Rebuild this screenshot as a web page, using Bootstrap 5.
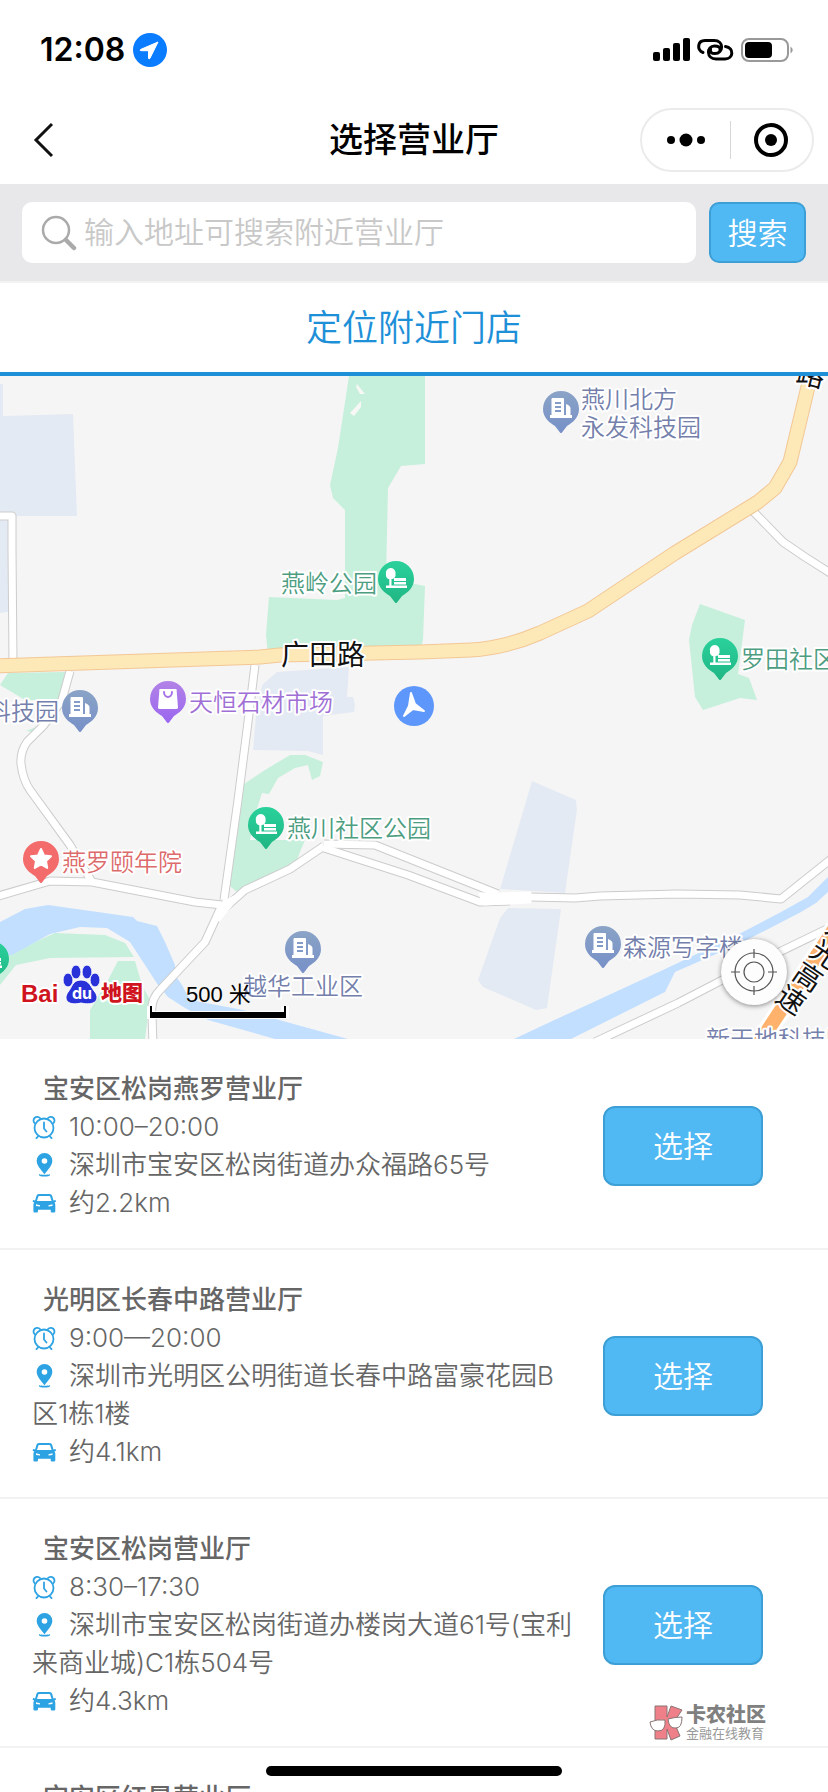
<!DOCTYPE html>
<html lang="zh-CN">
<head>
<meta charset="utf-8">
<meta name="viewport" content="width=device-width, initial-scale=1">
<title>选择营业厅</title>
<link href="https://cdn.jsdelivr.net/npm/bootstrap@5.3.0/dist/css/bootstrap.min.css" rel="stylesheet">
<style>
  body { font-family: Inter, "Noto Sans CJK SC", sans-serif; color: #666; background: #fff; }
  .app { height: 100vh; }
  .status { height: 100px; padding: 0 34px 0 40px; color: #000; }
  .clock { font-size: 32px; font-weight: 600; line-height: 36px; }
  .titlebar { height: 84px; padding: 0 14px 4px; color: #000; }
  .titlebar .side { flex: 1 1 0; }
  .titlebar h1 { font-size: 34px; line-height: 44px; font-weight: 500; }
  .back { margin-left: 18px; }
  .capsule { width: 174px; height: 64px; border: 2px solid #ebebeb; border-radius: 32px; }
  .capsule button + button { border-left: 1px solid #d8d8d8; }
  .capsule button { height: 38px; }
  .plain { border: 0; background: none; padding: 0; color: inherit; }
  .searchbar { background: #e8e8ea; padding: 18px 22px; gap: 13px; border-bottom: 2px solid #f2f2f3; }
  .field { height: 61px; border-radius: 10px; background: #fff; padding-left: 19px; gap: 7px; }
  .field input { border: 0; outline: 0; background: none; font-size: 30px; font-weight: 350; padding: 0; min-width: 0; color: #666; }
  .field input::placeholder { color: #c8c8c8; opacity: 1; }
  .btn-sky { --bs-btn-bg: #50b8f3; --bs-btn-border-color: #3c9fd6; --bs-btn-color: #fff; --bs-btn-hover-bg: #3fa9e6; --bs-btn-hover-color: #fff; --bs-btn-hover-border-color: #3c9fd6; --bs-btn-active-bg: #3fa9e6; --bs-btn-active-color: #fff;
    border-width: 2px; border-radius: 12px; font-size: 30px; font-weight: 350; line-height: 40px; padding: 0; flex: none; }
  .btn-find { width: 97px; height: 61px; border-radius: 10px; }
  .btn-pick { width: 160px; height: 80px; }
  .tab-near { height: 93px; border-bottom: 4px solid #1e90d8; }
  .tab-near a { color: #1e90d8; font-size: 36px; line-height: 48px; text-decoration: none; font-weight: 350; }
  .mapbox { height: 663px; background: #f5f5f5; }
  .mapbox svg.base { width: 100%; height: 100%; }
  .poi { font-size: 24px; font-weight: 350; paint-order: stroke; stroke: #fff; stroke-width: 4px; stroke-linejoin: round; }
  .road-name { font-size: 28px; font-weight: 400; fill: #111; }
  .brand { font-weight: 900; }
  .locate { right: 41px; bottom: 34px; width: 66px; height: 66px; border-radius: 50%; border: 0; padding: 0; background: #fdfdfd; box-shadow: 0 1px 5px rgba(0,0,0,.45); }
  .shop { padding: 31px 65px 26px 32px; gap: 28px; border-bottom: 2px solid #f2f2f3; }
  .shop h2 { font-size: 26px; line-height: 38px; font-weight: 500; margin: 0 0 0 11px; }
  .shop p { font-size: 26px; line-height: 38px; font-weight: 350; margin: 0; }
  .shop p svg { width: 24px; height: 24px; margin: -4px 13px 0 0; color: #2ea3e3; }
  .shop-info { flex: 1 1 0; min-width: 0; }
  .homebar { left: 50%; bottom: 16px; width: 296px; height: 10px; margin-left: -148px; border-radius: 5px; background: #000; }
  .stamp { right: 62px; bottom: 51px; gap: 3px; color: #808080; }
  .stamp b { font-size: 20px; line-height: 20px; font-weight: 900; }
  .stamp span { font-size: 13px; line-height: 16px; color: #999; }
</style>
</head>
<body>
<svg class="d-none" aria-hidden="true">
  <symbol id="i-clock" viewBox="0 0 24 24">
    <g fill="none" stroke="currentColor" stroke-width="1.8" stroke-linecap="round">
      <circle cx="12" cy="13" r="9.500"/><path d="M2.500 8A3.500 3.500 0 1 1 8 3M21.500 8A3.500 3.500 0 1 0 16 3M12 7.500V13.500l2.500 3M6 21.500l-1.500 1.700M18 21.500l1.500 1.700"/>
    </g>
  </symbol>
  <symbol id="i-pin" viewBox="0 0 24 24">
    <path fill="currentColor" fill-rule="evenodd" d="M12.500 0a7.800 7.800 0 0 1 7.800 7.900c0 4-3.600 8-7.800 13.300C8.300 15.900 4.700 11.900 4.700 7.900A7.800 7.800 0 0 1 12.500 0zm0 5.200a2.800 2.800 0 1 0 0 5.600 2.800 2.800 0 0 0 0-5.600z"/>
    <path d="M8 21.500c-1.500 1.600 10.500 1.600 9 0" fill="none" stroke="currentColor" stroke-width="1.800"/>
  </symbol>
  <symbol id="i-car" viewBox="0 0 24 24">
    <path fill="currentColor" fill-rule="evenodd" d="M7 3h10.500c1.500 0 2.300.8 2.700 2l1.300 4.500 2-.6.500 1.800-1.500.8c.6.800.8 1.700.8 2.600V20c0 1-.6 1.600-1.600 1.600h-1.400c-1 0-1.600-.6-1.600-1.600v-1.200H6V20c0 1-.6 1.600-1.600 1.600H3c-1 0-1.600-.6-1.600-1.600v-5.900c0-.9.200-1.800.8-2.600L.6 10.700l.5-1.800 2 .6L4.400 5c.4-1.200 1.200-2 2.600-2zm.4 2C6.700 5 6.400 5.400 6.200 6L5 10h14.600l-1.300-4c-.2-.6-.5-1-1.200-1zM4 13.200v1.700l4 .6v-1.200zm16.500 0l-4 1.100v1.200l4-.6z"/>
  </symbol>
</svg>

<div class="app position-relative d-flex flex-column overflow-hidden">
  <header class="flex-shrink-0">
    <div class="status d-flex align-items-center justify-content-between">
      <div class="d-flex align-items-center gap-2">
        <span class="clock">12:08</span>
        <svg width="34" height="34" viewBox="0 0 34 34" aria-hidden="true"><circle cx="17" cy="17" r="17" fill="#0a7cff"/><path d="M25 9L7.500 16.500q-1 .8.300 1.200h7.700v7.500q.5 1.500 1.400.2z" fill="#fff" stroke="#fff" stroke-linejoin="round"/></svg>
      </div>
      <svg width="141" height="26" viewBox="0 0 141 26" aria-hidden="true">
        <g><rect x="0" y="15" width="7" height="9" rx="2"/><rect x="10" y="11" width="7" height="13" rx="2"/><rect x="20" y="6" width="7" height="18" rx="2"/><rect x="30" y="1" width="7" height="23" rx="2"/></g>
        <g fill="none" stroke="#000" stroke-width="3" stroke-linecap="round">
          <path d="M50 15.500C43.500 13 44.500 3.500 52 3.500H61C71.500 3.500 70.500 16.500 62 16.500 58.500 16.500 57 15.500 57.500 12"/>
          <path d="M72.500 9.500C81.500 11 80.500 22 72 22H63C53 22 53.500 9 61.500 9 65.500 9 67.500 10.500 67 13"/>
        </g>
        <rect x="89" y="2" width="46" height="22" rx="7" fill="none" stroke="#999" stroke-width="2"/>
        <rect x="92" y="5" width="27" height="16" rx="4"/><path d="M137.500 9.500q4.500 3.500 0 7z" fill="#999"/>
      </svg>
    </div>
    <div class="titlebar d-flex align-items-center">
      <div class="side"><button class="plain back d-flex" type="button" aria-label="返回"><svg width="24" height="36" viewBox="0 0 24 36"><path d="M20 2L4 18l16 16" fill="none" stroke="#111" stroke-width="3"/></svg></button></div>
      <h1 class="m-0">选择营业厅</h1>
      <div class="side d-flex justify-content-end">
        <div class="capsule d-flex align-items-center">
          <button class="plain flex-fill d-flex align-items-center justify-content-center" type="button" aria-label="更多"><svg width="40" height="16" viewBox="0 0 40 16"><circle cx="5" cy="8" r="4"/><circle cx="20" cy="8" r="6.500"/><circle cx="35" cy="8" r="4"/></svg></button>
          <button class="plain flex-fill d-flex align-items-center justify-content-center" type="button" aria-label="关闭"><svg width="34" height="34" viewBox="0 0 34 34"><circle cx="17" cy="17" r="15" fill="none" stroke="#000" stroke-width="4"/><circle cx="17" cy="17" r="6"/></svg></button>
        </div>
      </div>
    </div>
    <form class="searchbar d-flex">
      <div class="field d-flex align-items-center flex-fill">
        <label for="q" class="d-flex" aria-label="搜索地址"><svg width="36" height="36" viewBox="0 0 36 36"><circle cx="15" cy="15" r="13" fill="none" stroke="#aaa" stroke-width="2.500"/><path d="M25 25l8 8" stroke="#aaa" stroke-width="4.500" stroke-linecap="round"/></svg></label>
        <input id="q" type="text" class="flex-fill" placeholder="输入地址可搜索附近营业厅">
      </div>
      <button class="btn btn-sky btn-find" type="button">搜索</button>
    </form>
    <nav class="tab-near d-flex align-items-center justify-content-center"><a href="#near">定位附近门店</a></nav>
  </header>

  <section class="mapbox position-relative flex-shrink-0 overflow-hidden" id="near">
    <svg class="base d-block" viewBox="0 376 828 663" preserveAspectRatio="xMidYMid slice">
      <defs>
        <linearGradient id="gG" x1="0" y1="0" x2="0" y2="1"><stop offset="0" stop-color="#2ad19b"/><stop offset="1" stop-color="#20b684"/></linearGradient>
        <linearGradient id="gP" x1="0" y1="0" x2="0" y2="1"><stop offset="0" stop-color="#b283e6"/><stop offset="1" stop-color="#9a66f0"/></linearGradient>
        <linearGradient id="gB" x1="0" y1="0" x2="0" y2="1"><stop offset="0" stop-color="#8aa3c6"/><stop offset="1" stop-color="#7790c8"/></linearGradient>
        <path id="drop" d="M0-18A18 18 0 0 1 18 0C18 9 11 14 6 17L1 23.500Q0 24.500-1 23.500L-6 17C-11 14-18 9-18 0A18 18 0 0 1 0-18z"/>
        <g id="m-park"><use href="#drop" fill="url(#gG)"/><path fill="#fff" d="M-5-11a5 5 0 0 1 4.500 6 4 4 0 0 1-4 5V6.500H11V9H-10V6.500h3.300V.3A4 4 0 0 1-10-4.500a5 5 0 0 1 5-6.500zM-2-1H10V2H-2zM-2 3H10V5.500H-2z"/></g>
        <g id="m-office"><use href="#drop" fill="url(#gB)"/><path fill="#fff" fill-rule="evenodd" d="M-9-11H2Q3-11 3-10V6H5V-5Q10-3 9.500 0V6H11V9H-11V6h1.500V-10zM-6-7v2H0v-2zM-6-3v2H0v-2zM-6 1v2H0V1z"/></g>
        <g id="m-mall"><use href="#drop" fill="url(#gP)"/><path d="M-8.500-10H8.500L10 8.500Q10 10 8 10H-8Q-10 10-10 8.500z" fill="#fff"/><path d="M-4-7c0 6.500 8 6.500 8 0" fill="none" stroke="#a673e8" stroke-width="2" stroke-linecap="round"/></g>
        <g id="m-star"><use href="#drop" fill="#f36b6b"/><path fill="#fff" stroke="#fff" stroke-width="2" stroke-linejoin="round" d="M0-10L3-3.500 10-2.800 5 2 6.200 9 0 5.500-6.200 9-5 2-10-2.800-3-3.500z"/></g>
        <g id="lanes">
          <path d="M-5 516H12V550L13 662"/><path d="M70 671L62 700 44 725 27 742Q20 752 21 764 23 780 30 790L70 845 92 882"/>
          <path d="M255 665L247 730 238 800 224 900"/><path d="M-5 897L50 881 92 882 195 902 222 905"/>
          <path d="M218 914L245 890 290 869 324 846"/><path d="M222 905L205 942 160 990Q150 1000 152 1015L153 1045"/>
          <path d="M324 844L375 845 410 859 498 894"/><path d="M324 848L408 875 480 902 510 901"/><path d="M490 897H530L575 898 600 896 677 894 740 895 781 899 835 856"/>
          <path d="M595 1042L678 1003 730 976 835 925"/><path d="M750 508L783 542 805 557 835 576"/>
        </g>
      </defs>
      <g fill="#e4eaf3">
        <path d="M0 384H3V416L73 414 77 516H0zM0 520H8V612L0 613z"/>
        <path d="M277 672L349 667 347 697H353Q356 704 354 712L323 716V755L308 751 253 750 256 716 262 685z"/>
        <path d="M532 781L576 800 577 810 565 893 500 889zM508 908L561 909 547 1008 536 1010 483 987 478 980 500 918z"/>
      </g>
      <g fill="#c6f0dc">
        <path d="M349 376H425V464L401 466 388 488 386 580 415 584 425 586 423 640 420 650 268 655 266 635 269 597 337 600 345 598V510L333 498 330 485 338 448z"/>
        <path d="M700 604L745 620 738 674 749 678 757 700 740 698 703 710 695 697 689 640 692 625z"/>
        <path d="M8 673L65 672 60 700H25L0 685zM26 731L36 727 34 732z"/>
        <path d="M265 770L290 755 305 755 323 762 320 776 312 780 308 765 295 768 278 778 269 794 262 793 256 812 250 840H305L298 857 297 866 270 880 238 893 230 886 244 784z"/>
        <path d="M0 958L55 933 105 935 125 943 134 957 50 958 16 965 0 985zM90 1039V1010L108 980 118 961H135L142 985 150 1000 145 1039z"/>
      </g>
      <path fill="#f7f7f5" d="M357 384L365 394 360 394 356 387zM350 413L361 401V407L354 416z"/>
      <path fill="#c2dfff" d="M0 922L25 909 48 905 133 917 137 921 157 926 165 942 175 965V975L182 985 190 1000 243 1010 348 1039H275L208 1020 185 1008 168 997 158 985 130 942 107 928 80 927 50 934 12 955H0z"/>
      <path fill="#c2dfff" d="M514 1039L548 1023 663 970 741 933 781 912 808 897 828 877V892L816 903 801 912 741 943 675 972 665 992 571 1039z"/>
      <g fill="none" stroke-linejoin="round">
        <use href="#lanes" stroke="#ccc" stroke-width="9"/><use href="#lanes" stroke="#fff" stroke-width="7"/>
        <path d="M219 920L240 894 224 902zM480 894L530 893V902L484 904z" fill="#fff" stroke="#fff" stroke-width="3"/>
        <path d="M-5 666L260 657 280 655 420 652 471 650Q505 648 540 633L588 611 675 553 758 502 775 488 790 462 812 370" stroke="#f3c795" stroke-width="15"/>
        <path d="M-5 666L260 657 280 655 420 652 471 650Q505 648 540 633L588 611 675 553 758 502 775 488 790 462 812 370" stroke="#fde9b8" stroke-width="13"/>
        <path d="M758 1045L835 928" stroke="#fff" stroke-width="20"/><path d="M758 1045L835 928" stroke="#ffb26b" stroke-width="14"/>
      </g>
      <use href="#m-office" x="561" y="409"/><use href="#m-office" x="80" y="708"/><use href="#m-office" x="303" y="949"/><use href="#m-office" x="603" y="944"/>
      <use href="#m-park" x="396" y="579"/><use href="#m-park" x="720" y="656"/><use href="#m-park" x="266" y="825"/><use href="#m-park" x="-9" y="959"/>
      <use href="#m-mall" x="168" y="699"/><use href="#m-star" x="41" y="859"/>
      <circle cx="414" cy="706" r="20" fill="#5d97fb"/><path d="M411 693L415 704 424 711 413 709 404 716 409 706z" fill="#fff" stroke="#fff" stroke-width="2" stroke-linejoin="round"/>
      <g class="poi" fill="#4d9d81"><text x="281" y="592">燕岭公园</text><text x="741" y="668">罗田社区</text><text x="287" y="837">燕川社区公园</text></g>
      <g class="poi" fill="#7480ab"><text x="581" y="408">燕川北方</text><text x="581" y="436">永发科技园</text><text x="-13" y="720">科技园</text><text x="243" y="995">越华工业区</text><text x="623" y="956">森源写字楼</text><text x="706" y="1048">新天地科技园</text></g>
      <text class="poi" fill="#a06fd6" x="189" y="711">天恒石材市场</text>
      <text class="poi" fill="#dd6b6b" x="62" y="871">燕罗颐年院</text>
      <g class="poi road-name">
        <text x="281" y="665">广田路</text>
        <g text-anchor="middle"><text transform="translate(811 375) rotate(14)" y="10">路</text>
        <text transform="translate(841 931) rotate(34)" y="10">龙</text><text transform="translate(825 954) rotate(34)" y="10">光</text><text transform="translate(808 977) rotate(34)" y="10">高</text><text transform="translate(791 1000) rotate(34)" y="10">速</text></g>
      </g>
      <g fill="#cf1420"><text class="poi brand" x="21" y="1002" font-family="Liberation Sans, sans-serif">Bai</text><text class="poi brand" x="101" y="1000" style="font-size:21px">地图</text></g>
      <g fill="#2932d8" stroke="#fff" stroke-width="1"><ellipse cx="68" cy="980" rx="5" ry="7"/><ellipse cx="76" cy="972" rx="5" ry="7"/><ellipse cx="87" cy="972" rx="5" ry="7"/><ellipse cx="95" cy="980" rx="5" ry="7"/><path d="M81 980C90 980 91 988 95 992 101 1001 93 1006 81 1003 70 1006 62 1001 68 992 72 988 72 980 81 980z"/></g>
      <text x="72" y="999" font-size="16" font-weight="700" fill="#fff" font-family="Inter, sans-serif">du</text>
      <path d="M151 1006V1015H285V1006" fill="none" stroke="#fff" stroke-width="8"/><path d="M151 1006V1017M285 1006V1017" stroke="#000" stroke-width="2"/><path d="M150 1015H286" stroke="#000" stroke-width="6"/>
      <text x="186" y="1002" font-size="22" fill="#000" font-family="Liberation Sans, Noto Sans CJK SC, sans-serif">500 米</text>
    </svg>
    <button class="locate position-absolute" type="button" aria-label="定位"><svg class="d-block m-auto" width="46" height="46" viewBox="0 0 46 46"><g fill="none" stroke="#555" stroke-width="1.200"><circle cx="23" cy="23" r="19"/><circle cx="23" cy="23" r="10"/><path d="M23 0v9M23 37v9M0 23h9M37 23h9"/></g></svg></button>
  </section>

  <main class="flex-fill overflow-hidden">
    <article class="shop d-flex align-items-center">
      <div class="shop-info">
        <h2>宝安区松岗燕罗营业厅</h2>
        <p><svg><use href="#i-clock"/></svg>10:00–20:00</p>
        <p><svg><use href="#i-pin"/></svg>深圳市宝安区松岗街道办众福路65号</p>
        <p><svg><use href="#i-car"/></svg>约2.2km</p>
      </div>
      <button class="btn btn-sky btn-pick" type="button">选择</button>
    </article>
    <article class="shop d-flex align-items-center">
      <div class="shop-info">
        <h2>光明区长春中路营业厅</h2>
        <p><svg><use href="#i-clock"/></svg>9:00—20:00</p>
        <p><svg><use href="#i-pin"/></svg>深圳市光明区公明街道长春中路富豪花园B区1栋1楼</p>
        <p><svg><use href="#i-car"/></svg>约4.1km</p>
      </div>
      <button class="btn btn-sky btn-pick" type="button">选择</button>
    </article>
    <article class="shop d-flex align-items-center">
      <div class="shop-info">
        <h2>宝安区松岗营业厅</h2>
        <p><svg><use href="#i-clock"/></svg>8:30–17:30</p>
        <p><svg><use href="#i-pin"/></svg>深圳市宝安区松岗街道办楼岗大道61号(宝利来商业城)C1栋504号</p>
        <p><svg><use href="#i-car"/></svg>约4.3km</p>
      </div>
      <button class="btn btn-sky btn-pick" type="button">选择</button>
    </article>
    <article class="shop d-flex align-items-center">
      <div class="shop-info"><h2>宝安区红星营业厅</h2></div>
    </article>
  </main>

  <div class="stamp position-absolute d-flex align-items-center">
    <svg width="34" height="36" viewBox="0 0 34 36" aria-hidden="true">
      <g stroke="#8a7474" stroke-width="1"><path d="M6 1H18V12L22 1 33 5 25 17 31 31 22 35 18 24V34H6z" fill="#ef7f88"/><path d="M1 17Q8 14 16 15 17 26 9 26 2 26 1 17zM19 14Q26 12 33 12 33 23 27 23 20 24 19 14z" fill="#fff"/></g>
    </svg>
    <div class="d-flex flex-column"><b>卡农社区</b><span>金融在线教育</span></div>
  </div>
  <div class="homebar position-absolute"></div>
</div>
<script src="https://cdn.jsdelivr.net/npm/bootstrap@5.3.0/dist/js/bootstrap.bundle.min.js"></script>
</body>
</html>
